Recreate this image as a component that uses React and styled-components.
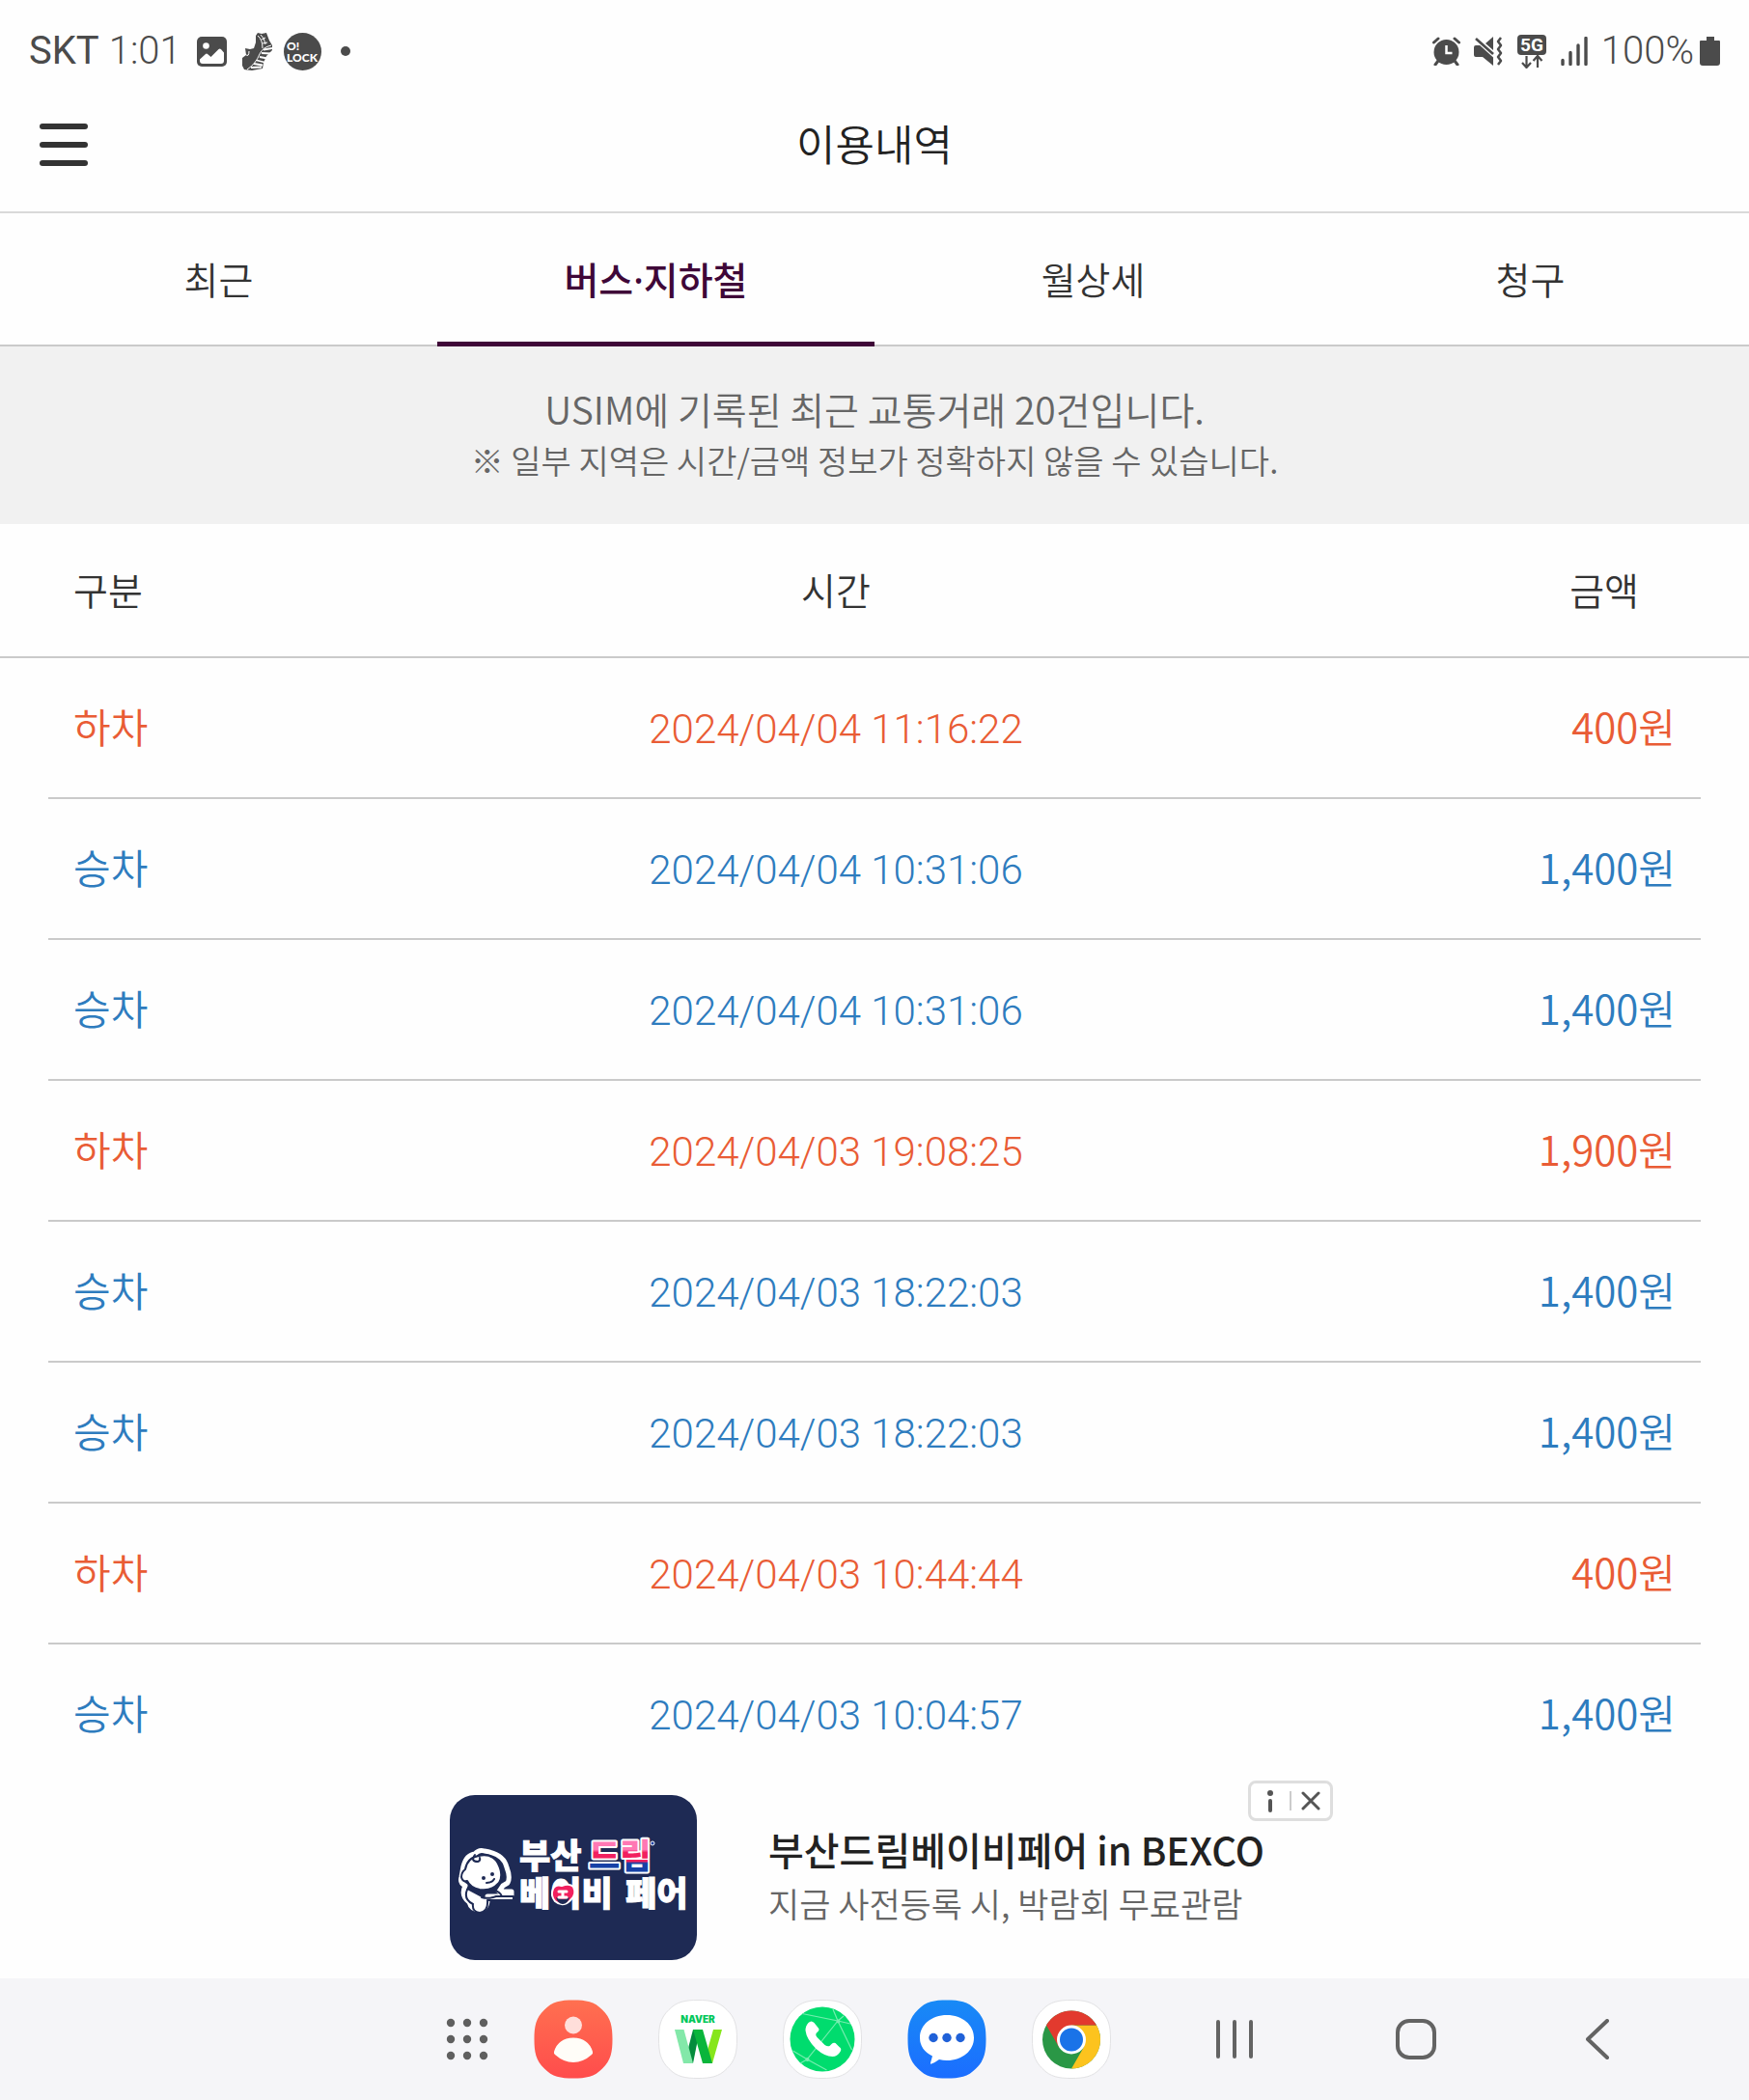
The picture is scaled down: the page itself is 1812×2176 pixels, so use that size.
import styled, { createGlobalStyle } from "styled-components";

const GlobalStyle = createGlobalStyle`
  * {
    box-sizing: border-box;
  }

  body {
    margin: 0;
    background: #fefefe;
    color: #333333;
    font-family: "Noto Sans CJK KR", sans-serif;
  }

  button {
    padding: 0;
    border: none;
    background: none;
    color: inherit;
    font: inherit;
    cursor: pointer;
  }
`;

const Page = styled.div`
  display: flex;
  flex-direction: column;
  min-height: 100vh;
`;

/* ---------- status bar ---------- */

const StatusBar = styled.div`
  display: flex;
  justify-content: space-between;
  align-items: center;
  height: 80px;
  padding: 26px 30px 0;
  color: #4b4b4b;
  font-family: Roboto, sans-serif;
  font-size: 40px;
  line-height: 54px;
`;

const StatusGroup = styled.div`
  display: flex;
  align-items: center;
  gap: ${(props) => props.$gap}px;
`;

const StatusText = styled.span`
  font-weight: ${(props) => (props.$light ? 300 : 400)};
`;

const BatteryLevel = styled.div`
  display: flex;
  align-items: center;
  gap: 6px;
  font-weight: 300;
`;

/* ---------- header ---------- */

const Header = styled.header`
  display: grid;
  grid-template-columns: 50px 1fr 50px;
  align-items: center;
  height: 141px;
  padding: 0 41px;
  border-bottom: 2px solid #d9d9d9;
`;

const MenuButton = styled.button`
  display: flex;
  flex-direction: column;
  gap: 13px;
`;

const MenuBar = styled.span`
  width: 50px;
  height: 6px;
  border-radius: 3px;
  background: #333333;
`;

const Title = styled.h1`
  margin: 0 0 4px;
  color: #222222;
  font-size: 44px;
  font-weight: 350;
  line-height: 64px;
  text-align: center;
`;

/* ---------- tabs ---------- */

const Tabs = styled.nav`
  display: grid;
  grid-template-columns: repeat(4, 1fr);
  height: 138px;
  box-shadow: inset 0 -2px #cacaca;
`;

const Tab = styled.button`
  border-bottom: 5px solid ${(props) => (props.$active ? "#3f0738" : "transparent")};
  color: ${(props) => (props.$active ? "#3f0738" : "#333333")};
  font-family: "Noto Sans", "Noto Sans CJK KR", sans-serif;
  font-size: 39px;
  font-weight: ${(props) => (props.$active ? 500 : 350)};
`;

/* ---------- notice ---------- */

const Notice = styled.section`
  display: flex;
  flex-direction: column;
  justify-content: center;
  height: 184px;
  padding-bottom: 2px;
  background: #f1f1f1;
  color: #666666;
  text-align: center;
`;

const NoticeLine = styled.p`
  margin: 0;
  font-size: ${(props) => (props.$small ? 34 : 39)}px;
  font-weight: 350;
  line-height: 54px;
`;

/* ---------- history ---------- */

const History = styled.table`
  display: block;
  flex: 1;
`;

const HistoryHead = styled.thead`
  display: block;
`;

const HistoryBody = styled.tbody`
  display: block;
`;

const HeadRow = styled.tr`
  display: grid;
  grid-template-columns: 160px 1fr 240px;
  align-items: center;
  height: 139px;
  padding: 0 76px 4px;
  border-bottom: 2px solid #cacaca;
`;

const HeadCell = styled.th`
  padding: ${(props) => (props.$align === "right" ? "0 38px 0 0" : 0)};
  font-size: 39px;
  font-weight: 350;
  line-height: 56px;
  text-align: ${(props) => props.$align};
`;

const Row = styled.tr`
  display: grid;
  grid-template-columns: 160px 1fr 240px;
  align-items: baseline;
  height: 146px;
  margin: 0 50px;
  padding: 42px 26px 0;
  border-bottom: 2px solid #cacaca;
  color: ${(props) => (props.$out ? "#e95c35" : "#2e7cbe")};

  &:last-child {
    height: 136px;
    border-bottom: none;
  }
`;

const Cell = styled.td`
  padding: 0;
  font-size: 42px;
  font-weight: 350;
  line-height: 56px;
  text-align: ${(props) => props.$align};
`;

const TimeCell = styled(Cell)`
  font-family: Roboto, sans-serif;
  font-weight: 300;
`;

/* ---------- ad ---------- */

const Ad = styled.aside`
  position: relative;
  display: flex;
  align-items: center;
  gap: 74px;
  width: 100%;
  max-width: 950px;
  height: 210px;
  margin: 0 auto;
  padding-left: 35px;
`;

const AdText = styled.div`
  padding-bottom: 2px;
  line-height: 56px;
`;

const AdTitle = styled.div`
  color: #222222;
  font-size: 40px;
  font-weight: 500;
`;

const AdCopy = styled.div`
  color: #666666;
  font-size: 35px;
  font-weight: 350;
`;

const AdControls = styled.div`
  position: absolute;
  top: 5px;
  right: 0;
  display: flex;
  align-items: center;
  width: 88px;
  height: 42px;
  border: 3px solid #dedede;
  border-radius: 8px;
  background: #ffffff;
`;

const AdButton = styled.button`
  display: flex;
  flex: 1;
  justify-content: center;
  align-items: center;

  & + & {
    border-left: 2px solid #cccccc;
  }
`;

/* ---------- bottom bar ---------- */

const BottomBar = styled.footer`
  display: flex;
  justify-content: flex-end;
  align-items: center;
  height: 126px;
  padding-right: 63px;
  background: #f5f5f8;
`;

const Dock = styled.div`
  display: flex;
  align-items: center;
  gap: 47px;
  margin-right: 34px;
`;

const IconButton = styled.button`
  display: flex;
`;

const NavButton = styled.button`
  display: flex;
  justify-content: center;
  align-items: center;
  width: 188px;
  height: 126px;
`;

/* ---------- icons ---------- */

const PictureIcon = () => (
  <svg width="31" height="31" viewBox="0 0 31 31">
    <rect width="31" height="31" rx="5" fill="#4b4b4b" />
    <circle cx="9.500" cy="9.500" r="3.300" fill="#fefefe" />
    <path
      d="M3 23.500L9 18q1-.8 2 0l3.500 3 8-8q1.200-1 2.400 0L28 16.500V25q0 3-3 3H6q-3 0-3-3z"
      fill="#fefefe"
    />
  </svg>
);

const ShoeIcon = () => (
  <svg width="31" height="39" viewBox="0 0 31 39">
    <path
      d="M14 3l2-3 4 1 5-1 3 8 3 5v5l-6 6-3 7-1 6-11 2-8-1-2-4v-8l4-3-1-7 5 1 4-1 2-6z"
      fill="#4b4b4b"
    />
    <path
      d="M30 13q-9 2-12 9-4 10-13 16M16 3q5 4 5 13M19 2q4 3 5 10M20 7l4-2M21 11l5-1M3 22q4 4 4-3"
      fill="none"
      stroke="#fefefe"
      strokeWidth="1"
    />
    <path
      d="M22 17.500l9-1.500M20 21l10 .5M18 25l8 1.500M15 28.500l8 2M12 32l9 1.500M9 36l11-.5"
      stroke="#fefefe"
      strokeWidth="1.800"
    />
  </svg>
);

const LockIcon = () => (
  <svg width="39" height="39" viewBox="0 0 39 39">
    <circle cx="19.500" cy="19.500" r="19.500" fill="#4b4b4b" />
    <g fill="#ffffff" fontFamily="Lato, sans-serif" fontWeight="900">
      <text x="3" y="18" fontSize="12">
        O!
      </text>
      <text x="3" y="30" fontSize="12">
        LOCK
      </text>
    </g>
  </svg>
);

const DotIcon = () => (
  <svg width="14" height="10" viewBox="0 0 14 10">
    <circle cx="9" cy="5" r="5" fill="#4b4b4b" />
  </svg>
);

const AlarmIcon = () => (
  <svg width="29" height="30" viewBox="0 0 29 30">
    <circle cx="14.500" cy="16" r="13" fill="#4b4b4b" />
    <path
      d="M1.500 6L6 2M27.500 6L23 2M6 25l-3 4M23 25l3 4"
      stroke="#4b4b4b"
      strokeWidth="3"
      strokeLinecap="round"
    />
    <path d="M14.500 9v8h6" fill="none" stroke="#fefefe" strokeWidth="2.500" />
  </svg>
);

const MuteIcon = () => (
  <svg width="30" height="30" viewBox="0 0 30 30">
    <path
      d="M2 9h6l12 11v10L9 21H2q-2 0-2-2v-8q0-2 2-2zM12 7l8-7v14z"
      fill="#4b4b4b"
    />
    <path d="M2 2l20 18" stroke="#fefefe" strokeWidth="5" />
    <path d="M2 2l18 16" stroke="#4b4b4b" strokeWidth="2.600" />
    <path
      d="M28 1l-3 4 3 4-3 4 3 4-3 4 3 4-3 4"
      fill="none"
      stroke="#4b4b4b"
      strokeWidth="2.500"
      strokeLinejoin="round"
    />
  </svg>
);

const FiveGIcon = () => (
  <svg width="32" height="35" viewBox="0 0 32 35">
    <rect x="1" width="30" height="21" rx="4" fill="#4b4b4b" />
    <text
      x="16"
      y="17"
      fill="#ffffff"
      fontFamily="Roboto, sans-serif"
      fontSize="19"
      fontWeight="700"
      textAnchor="middle"
    >
      5G
    </text>
    <path
      d="M10.500 22v12M6 29l4.500 5 4.500-5M22 34V22M17.500 27l4.500-5 4.500 5"
      fill="none"
      stroke="#4b4b4b"
      strokeWidth="2.200"
    />
  </svg>
);

const SignalIcon = () => (
  <svg width="28" height="30" viewBox="0 0 28 30">
    <path
      d="M2 28.500v-4M10 28.500v-12M18 28.500V9M26 28.500v-27"
      stroke="#4b4b4b"
      strokeWidth="3.400"
      strokeLinecap="round"
    />
  </svg>
);

const BatteryIcon = () => (
  <svg width="21" height="30" viewBox="0 0 21 30">
    <path
      d="M7 0h8v4h5q1 0 1 1v22q0 3-3 3H3q-3 0-3-3V5q0-1 1-1h6z"
      fill="#4b4b4b"
    />
  </svg>
);

const AdLogo = () => (
  <svg width="256" height="171" viewBox="0 0 256 171">
    <rect width="256" height="171" rx="26" fill="#1e2a54" />
    {/* baby */}
    <path
      d="M14 74q3-12 12-13 4-5 10-3 20 3 23 17 4 10 1 16l-5 3-4 6h13v5H39q1 13-8 14-9 0-11-8-9-7-4-17-6-3-4-9z"
      fill="#1e2a54"
      stroke="#ffffff"
      strokeWidth="5"
      strokeLinejoin="round"
    />
    <g
      fill="#ffffff"
      stroke="#1e2a54"
      strokeWidth="2"
      strokeLinecap="round"
      strokeLinejoin="round"
    >
      <path d="M16 77q2-12 14-14 14-3 20 8 6 12 1 20-8 9-20 7-10-2-13-9-5 1-6-4 0-5 4-8z" />
      <path d="M18 98q-4 10 6 15-1 8 7 9 9-1 8-13h27v-4H48q-8 3-15 1M46 99q6 1 8 6" />
      <path d="M26 62q-5 7 3 7 3-1 2-4" fill="none" />
      <path d="M38 91q6 0 8-4" fill="none" />
    </g>
    <circle cx="35" cy="86" r="2" fill="#1e2a54" />
    <circle cx="44" cy="82" r="2" fill="#1e2a54" />
    <defs>
      <linearGradient id="dream" x1="0" y1="0" x2="0" y2="1">
        <stop offset="0.420" stopColor="#ff78b4" />
        <stop offset="0.480" stopColor="#f2205e" />
        <stop offset="0.660" stopColor="#f2205e" />
        <stop offset="0.700" stopColor="#1741a6" />
      </linearGradient>
    </defs>
    <g
      fill="#ffffff"
      stroke="#ffffff"
      fontFamily="'Noto Sans CJK KR', sans-serif"
      fontSize="35"
      fontWeight="900"
    >
      <text x="72" y="76">
        부산
      </text>
      <text
        x="144"
        y="76"
        fill="url(#dream)"
        strokeWidth="4"
        strokeLinejoin="round"
        paintOrder="stroke"
      >
        드림
      </text>
      <text x="72" y="115">
        베이비
      </text>
      <text x="182" y="115">
        페어
      </text>
    </g>
    <circle cx="210" cy="50" r="2" fill="#1741a6" stroke="#ffffff" />
    <path
      d="M107 97q3-5 9-3 8-3 12 1 4 8-3 14-8 8-16 1-5-6-2-13z"
      fill="#f2205e"
      stroke="#ffffff"
      strokeWidth="2"
    />
    <path d="M110 106q7 4 14 0-2 7-7 7t-7-7z" fill="#1e2a54" />
    <path
      d="M113 100h8M113 106h8M117 100v6"
      stroke="#ffffff"
      strokeWidth="3"
      strokeLinecap="round"
    />
  </svg>
);

const InfoIcon = () => (
  <svg width="6" height="23" viewBox="0 0 6 23">
    <circle cx="3" cy="3" r="3" fill="#555555" />
    <rect x="1" y="9" width="4" height="14" rx="2" fill="#555555" />
  </svg>
);

const CloseIcon = () => (
  <svg width="20" height="20" viewBox="0 0 20 20">
    <path
      d="M2 2l16 16M18 2L2 18"
      stroke="#555555"
      strokeWidth="3"
      strokeLinecap="round"
    />
  </svg>
);

const AppsIcon = () => (
  <svg width="44" height="44" viewBox="0 0 44 44" fill="#5f5f5f">
    {[5, 22, 39].map((y) =>
      [5, 22, 39].map((x) => <circle key={`${x}-${y}`} cx={x} cy={y} r="4.200" />)
    )}
  </svg>
);

const SQUIRCLE =
  "M41 .5C54 .5 63 2 71 10.500 80 19 81.500 28 81.500 41S80 63 71 71.500C63 80 54 81.500 41 81.500S19 80 11 71.500C2 63 .5 54 .5 41S2 19 11 10.500C19 2 28 .5 41 .5Z";

const ContactsIcon = () => (
  <svg width="82" height="82" viewBox="0 0 82 82">
    <defs>
      <linearGradient id="contacts" x1="0" y1="0" x2="0" y2="1">
        <stop offset="0" stopColor="#ff7050" />
        <stop offset="1" stopColor="#ff4c4c" />
      </linearGradient>
    </defs>
    <path d={SQUIRCLE} fill="url(#contacts)" />
    <circle cx="41" cy="26.500" r="9" fill="#ffdeda" />
    <path
      d="M21 54q4-14 20-14.500Q57 40 61 54q.5 2-1 3-9 8-19 8t-19-8q-1.500-1-1-3z"
      fill="#fffdf8"
    />
  </svg>
);

const NaverIcon = () => (
  <svg width="82" height="82" viewBox="0 0 82 82">
    <path d={SQUIRCLE} fill="#ffffff" stroke="#e2e2e4" />
    <text
      x="41"
      y="24"
      fill="#03c75a"
      fontFamily="Inter, sans-serif"
      fontSize="10"
      fontWeight="900"
      textAnchor="middle"
    >
      NAVER
    </text>
    <path d="M36 31h7L36 66h-9z" fill="#048c3c" />
    <path d="M57 31h9L56 66h-9z" fill="#86e61b" />
    <path d="M17 31h9.500L36 66H26z" fill="#83e8a9" />
    <path d="M36 31h10l10 35H46z" fill="#0ab53b" />
  </svg>
);

const PhoneIcon = () => (
  <svg width="82" height="82" viewBox="0 0 82 82">
    <path d={SQUIRCLE} fill="#ffffff" stroke="#e2e2e4" />
    <circle cx="41" cy="41" r="33.500" fill="#00dc6e" />
    <path
      d="M20 14.500L57 22l13 3M52 10l5 12 14.500 30M57 22l6-5M57 22L25 62l-7 4M10.500 53l15 9 20 11"
      fill="none"
      stroke="#75edb0"
      strokeWidth="1.200"
    />
    <circle cx="57.500" cy="22.500" r="2" fill="#75edb0" />
    <circle cx="25.500" cy="62" r="2" fill="#75edb0" />
    <path
      d="M26.500 24q3-3 6 0l4 5q2 2 0 4l-2 2q-1 2 1 4l8 8q3 2 5 1l2-2q2-2 4-1l4 4q3 2 1 5-3 5-8 5-8 0-17-8-10-10-11-19 0-5 3-8z"
      fill="#ffffff"
    />
  </svg>
);

const MessagesIcon = () => (
  <svg width="82" height="82" viewBox="0 0 82 82">
    <defs>
      <linearGradient id="messages" x1="0" y1="0" x2="0" y2="1">
        <stop offset="0" stopColor="#188af6" />
        <stop offset="1" stopColor="#1b6dff" />
      </linearGradient>
    </defs>
    <path d={SQUIRCLE} fill="url(#messages)" />
    <path
      d="M41 16c16 0 28 10 28 23.500S57 63 41 63q-4 0-8-1-4 3-8 4.500-1.500.5-1-1l2-7Q13 52 13 39.500C13 26 25 16 41 16z"
      fill="#ffffff"
    />
    <g fill="#2061d8">
      <circle cx="27" cy="39.500" r="4.700" />
      <circle cx="41" cy="39.500" r="4.700" />
      <circle cx="55" cy="39.500" r="4.700" />
    </g>
  </svg>
);

const ChromeIcon = () => (
  <svg width="82" height="82" viewBox="0 0 82 82">
    <path d={SQUIRCLE} fill="#ffffff" stroke="#e2e2e4" />
    <circle cx="41" cy="41.500" r="30" fill="#2a9746" />
    <path d="M41 26.500h26A30 30 0 0 1 41 71.500L54 49z" fill="#fcc31e" />
    <path d="M15 26.500a30 30 0 0 1 52 0H41L28 49z" fill="#e23a2e" />
    <circle cx="41" cy="41.500" r="15" fill="#ffffff" />
    <circle cx="41" cy="41.500" r="12" fill="#1a73e8" />
  </svg>
);

const RecentsIcon = () => (
  <svg width="38" height="40" viewBox="0 0 38 40">
    <path
      d="M2 2v36M19 2v36M36 2v36"
      stroke="#636363"
      strokeWidth="4"
      strokeLinecap="round"
    />
  </svg>
);

const HomeIcon = () => (
  <svg width="42" height="42" viewBox="0 0 42 42">
    <rect
      x="2"
      y="2"
      width="38"
      height="38"
      rx="12"
      fill="none"
      stroke="#636363"
      strokeWidth="4"
    />
  </svg>
);

const BackIcon = () => (
  <svg width="24" height="42" viewBox="0 0 24 42">
    <path
      d="M22 2L2 21l20 19"
      fill="none"
      stroke="#636363"
      strokeWidth="4"
      strokeLinecap="round"
      strokeLinejoin="round"
    />
  </svg>
);

/* ---------- data ---------- */

const tabs = ["최근", "버스·지하철", "월상세", "청구"];

const history = [
  { type: "하차", time: "2024/04/04 11:16:22", amount: "400원" },
  { type: "승차", time: "2024/04/04 10:31:06", amount: "1,400원" },
  { type: "승차", time: "2024/04/04 10:31:06", amount: "1,400원" },
  { type: "하차", time: "2024/04/03 19:08:25", amount: "1,900원" },
  { type: "승차", time: "2024/04/03 18:22:03", amount: "1,400원" },
  { type: "승차", time: "2024/04/03 18:22:03", amount: "1,400원" },
  { type: "하차", time: "2024/04/03 10:44:44", amount: "400원" },
  { type: "승차", time: "2024/04/03 10:04:57", amount: "1,400원" },
];

const apps = [
  { name: "앱 목록", Icon: AppsIcon },
  { name: "연락처", Icon: ContactsIcon },
  { name: "네이버 웹툰", Icon: NaverIcon },
  { name: "전화", Icon: PhoneIcon },
  { name: "메시지", Icon: MessagesIcon },
  { name: "Chrome", Icon: ChromeIcon },
];

const App = () => {
  return (
    <Page>
      <GlobalStyle />
      <StatusBar>
        <StatusGroup $gap={16}>
          <StatusGroup $gap={10}>
            <StatusText>SKT</StatusText>
            <StatusText $light>1:01</StatusText>
          </StatusGroup>
          <PictureIcon />
          <StatusGroup $gap={12}>
            <ShoeIcon />
            <LockIcon />
          </StatusGroup>
          <DotIcon />
        </StatusGroup>
        <StatusGroup $gap={14}>
          <AlarmIcon />
          <MuteIcon />
          <FiveGIcon />
          <SignalIcon />
          <BatteryLevel>
            100%
            <BatteryIcon />
          </BatteryLevel>
        </StatusGroup>
      </StatusBar>

      <Header>
        <MenuButton aria-label="메뉴">
          <MenuBar />
          <MenuBar />
          <MenuBar />
        </MenuButton>
        <Title>이용내역</Title>
      </Header>

      <Tabs>
        {tabs.map((tab) => (
          <Tab key={tab} $active={tab === "버스·지하철"}>
            {tab}
          </Tab>
        ))}
      </Tabs>

      <Notice>
        <NoticeLine>USIM에 기록된 최근 교통거래 20건입니다.</NoticeLine>
        <NoticeLine $small>
          ※ 일부 지역은 시간/금액 정보가 정확하지 않을 수 있습니다.
        </NoticeLine>
      </Notice>

      <History>
        <HistoryHead>
          <HeadRow>
            <HeadCell $align="left">구분</HeadCell>
            <HeadCell $align="center">시간</HeadCell>
            <HeadCell $align="right">금액</HeadCell>
          </HeadRow>
        </HistoryHead>
        <HistoryBody>
          {history.map((item, index) => (
            <Row key={index} $out={item.type === "하차"}>
              <Cell $align="left">{item.type}</Cell>
              <TimeCell $align="center">{item.time}</TimeCell>
              <Cell $align="right">{item.amount}</Cell>
            </Row>
          ))}
        </HistoryBody>
      </History>

      <Ad>
        <AdLogo />
        <AdText>
          <AdTitle>부산드림베이비페어 in BEXCO</AdTitle>
          <AdCopy>지금 사전등록 시, 박람회 무료관람</AdCopy>
        </AdText>
        <AdControls>
          <AdButton aria-label="광고 정보">
            <InfoIcon />
          </AdButton>
          <AdButton aria-label="광고 닫기">
            <CloseIcon />
          </AdButton>
        </AdControls>
      </Ad>

      <BottomBar>
        <Dock>
          {apps.map(({ name, Icon }) => (
            <IconButton key={name} aria-label={name}>
              <Icon />
            </IconButton>
          ))}
        </Dock>
        <NavButton aria-label="최근 앱">
          <RecentsIcon />
        </NavButton>
        <NavButton aria-label="홈">
          <HomeIcon />
        </NavButton>
        <NavButton aria-label="뒤로">
          <BackIcon />
        </NavButton>
      </BottomBar>
    </Page>
  );
};

export default App;
